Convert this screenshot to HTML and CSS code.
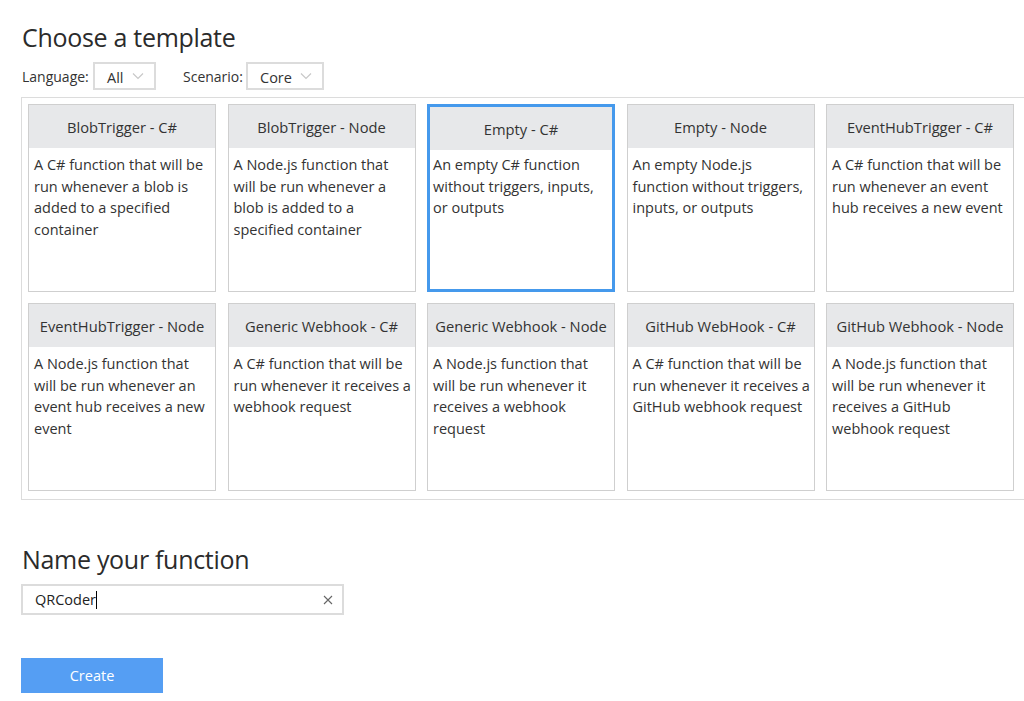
FILE: index.html
```html
<!DOCTYPE html>
<html>
<head>
<meta charset="utf-8">
<link rel="stylesheet" href="styles.css">
</head>
<body>
<div class="page">
  <h1 class="title">Choose a template</h1>
  <div class="filters">
    <label class="flabel">Language:</label>
    <div class="select sel-lang"><span>All</span><svg class="chev" width="12" height="8" viewBox="0 0 12 8"><path d="M1 1.5 L6 6.5 L11 1.5" fill="none" stroke="#c8c8c8" stroke-width="1.2"/></svg></div>
    <label class="flabel flabel2">Scenario:</label>
    <div class="select sel-scen"><span>Core</span><svg class="chev" width="12" height="8" viewBox="0 0 12 8"><path d="M1 1.5 L6 6.5 L11 1.5" fill="none" stroke="#c8c8c8" stroke-width="1.2"/></svg></div>
  </div>
  <div class="templates">
    <div class="grid">
      <div class="card"><div class="chead">BlobTrigger - C#</div><div class="cbody">A C# function that will be<br>run whenever a blob is<br>added to a specified<br>container</div></div>
      <div class="card"><div class="chead">BlobTrigger - Node</div><div class="cbody">A Node.js function that<br>will be run whenever a<br>blob is added to a<br>specified container</div></div>
      <div class="card selected"><div class="chead">Empty - C#</div><div class="cbody">An empty C# function<br>without triggers, inputs,<br>or outputs</div></div>
      <div class="card"><div class="chead">Empty - Node</div><div class="cbody">An empty Node.js<br>function without triggers,<br>inputs, or outputs</div></div>
      <div class="card"><div class="chead">EventHubTrigger - C#</div><div class="cbody">A C# function that will be<br>run whenever an event<br>hub receives a new event</div></div>
      <div class="card"><div class="chead">EventHubTrigger - Node</div><div class="cbody">A Node.js function that<br>will be run whenever an<br>event hub receives a new<br>event</div></div>
      <div class="card"><div class="chead">Generic Webhook - C#</div><div class="cbody">A C# function that will be<br>run whenever it receives a<br>webhook request</div></div>
      <div class="card"><div class="chead">Generic Webhook - Node</div><div class="cbody">A Node.js function that<br>will be run whenever it<br>receives a webhook<br>request</div></div>
      <div class="card"><div class="chead">GitHub WebHook - C#</div><div class="cbody">A C# function that will be<br>run whenever it receives a<br>GitHub webhook request</div></div>
      <div class="card"><div class="chead">GitHub Webhook - Node</div><div class="cbody">A Node.js function that<br>will be run whenever it<br>receives a GitHub<br>webhook request</div></div>
    </div>
  </div>
  <h1 class="title title2">Name your function</h1>
  <div class="namebox"><span class="nametext">QRCoder</span><span class="caret"></span><svg class="clear" width="10" height="10" viewBox="0 0 10 10"><path d="M1 1 L9 9 M9 1 L1 9" stroke="#666" stroke-width="1.1" fill="none"/></svg></div>
  <button class="create">Create</button>
</div>
</body>
</html>
```
FILE: styles.css
```css
html, body { margin: 0; padding: 0; overflow: hidden; background: #fff; }
body { font-family: "Open Sans", "Noto Sans", sans-serif; color: #333; }
.page { padding: 20px 0 0 21px; width: 1200px; }
.title { font-weight: 400; font-size: 25px; line-height: 34px; margin: 0 0 0 1px; color: #2b2b2b; letter-spacing: -0.3px; }
.filters { display: flex; align-items: center; height: 28px; margin-top: 8px; font-size: 14px; }
.flabel { margin-left: 1px; color: #333; width: 71px; }
.flabel2 { width: 63px; margin-left: 27px; }
.select { box-sizing: border-box; height: 28px; border: 2px solid #dcdcdc; display: flex; align-items: center; justify-content: space-between; padding: 2px 10px 0 12px; font-size: 14.5px; color: #333; }
.sel-lang { width: 63px; }
.sel-scen { width: 78px; }
.chev { margin-top: -2px; }
.templates { margin-top: 7px; border: 1px solid #dcdcdc; width: 1100px; box-sizing: border-box; padding: 6px 6px 8px 6px; }
.grid { display: grid; grid-template-columns: repeat(5, 188px); column-gap: 11.5px; row-gap: 11px; }
.card { box-sizing: border-box; height: 188px; border: 1px solid #cfcfcf; background: #fff; }
.card.selected { border: 3px solid #4599ec; }
.chead { height: 43px; background: #e7e8ea; display: flex; align-items: center; justify-content: center; font-size: 14.7px; color: #333; white-space: nowrap; }
.cbody { padding: 6px 2px 0 5px; font-size: 14.5px; line-height: 21.6px; color: #333; white-space: nowrap; overflow: hidden; }
.card.selected .cbody { padding: 4px 0 0 3px; }
.title2 { margin-top: 42px; }
.namebox { box-sizing: border-box; margin-top: 8px; width: 323px; height: 31px; border: 2px solid #dcdcdc; display: flex; align-items: center; padding: 0 0 0 12px; font-size: 14.5px; position: relative; }
.nametext { color: #222; }
.caret { display: inline-block; width: 1px; height: 18px; background: #000; }
.clear { position: absolute; right: 9px; top: 9px; }
.create { display: block; margin-top: 43px; width: 142px; height: 35px; border: none; background: #559ef3; color: #fff; font-family: "Open Sans", "Noto Sans", sans-serif; font-size: 14.5px; padding: 0; }
```
